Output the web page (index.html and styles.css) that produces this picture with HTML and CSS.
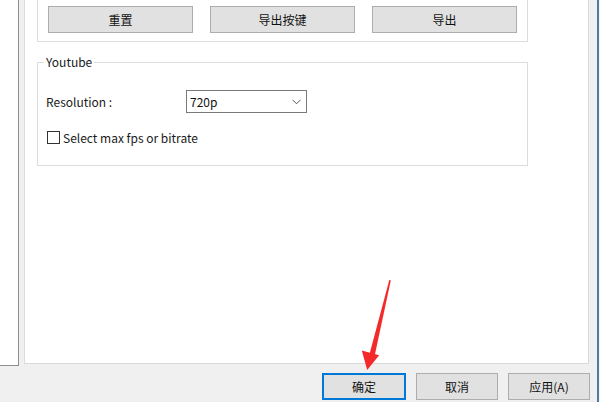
FILE: index.html
```html
<!DOCTYPE html>
<html lang="zh-CN">
<head>
<meta charset="utf-8">
<title>设置</title>
<link rel="stylesheet" href="styles.css">
</head>
<body>
<div class="frame">
  <div class="dialog">
    <div class="top">
      <div class="sidepane"></div>
      <div class="page">
        <div class="group group-top">
          <button class="btn wide">重置</button>
          <button class="btn wide">导出按键</button>
          <button class="btn wide">导出</button>
        </div>
        <fieldset class="group group-yt">
          <legend>Youtube</legend>
          <div class="row">
            <span class="label">Resolution :</span>
            <div class="combo">
              <span>720p</span>
              <svg class="chev" width="9" height="6" viewBox="0 0 9 6"><path d="M0.5 0.8 L4.5 4.8 L8.5 0.8" fill="none" stroke="#555" stroke-width="1"/></svg>
            </div>
          </div>
          <div class="row row-check">
            <span class="check"></span>
            <span>Select max fps or bitrate</span>
          </div>
        </fieldset>
      </div>
    </div>
    <div class="actions">
      <button class="btn act default">确定</button>
      <button class="btn act">取消</button>
      <button class="btn act">应用(A)</button>
    </div>
  </div>
  <div class="edge"></div>
  <div class="after"></div>
</div>
<svg class="arrow" width="600" height="402" viewBox="0 0 600 402">
  <polygon points="389.3,280 390.8,280.6 374.6,356 369.4,354.6" fill="#f42a2a"/>
  <polygon points="361.8,350.5 379.2,355.2 367.2,370" fill="#f42a2a"/>
</svg>
</body>
</html>
```
FILE: styles.css
```css
* { box-sizing: border-box; }
html, body { margin: 0; padding: 0; }
body {
  width: 600px;
  height: 402px;
  overflow: hidden;
  background: #ffffff;
  font-family: "Noto Sans CJK SC", "Noto Sans", sans-serif;
  font-size: 12px;
  color: #1a1a1a;
  position: relative;
}
.frame {
  display: flex;
  height: 402px;
}
.dialog {
  width: 597px;
  display: flex;
  flex-direction: column;
  background: #f0f0f0;
}
.edge { width: 2px; background: #4e7aa3; }
.after { width: 1px; background: #f4f4f4; }

.top {
  display: flex;
  height: 366px;
}
.sidepane {
  width: 19px;
  height: 366px;
  background: #ffffff;
  border-right: 1px solid #8e8e8e;
  border-bottom: 1px solid #8e8e8e;
}
.page {
  width: 565px;
  height: 364px;
  margin-left: 5px;
  background: #ffffff;
  border-left: 1px solid #dadada;
  border-right: 1px solid #dadada;
  border-bottom: 1px solid #dadada;
  padding-left: 12px;
  overflow: hidden;
}
.group {
  width: 491px;
  border: 1px solid #dcdcdc;
}
.group-top {
  margin-top: -10px;
  display: flex;
  gap: 17px;
  padding: 15px 10px 8px 10px;
}
.btn {
  font-family: "Noto Sans CJK SC", "Noto Sans", sans-serif;
  font-size: 12px;
  color: #111;
  background: #e1e1e1;
  border: 1px solid #adadad;
  height: 27px;
  padding: 0;
  margin: 0;
  line-height: 25px;
}
.wide { width: 145px; }

.group-yt {
  margin: 12px 0 0 0;
  padding: 0 0 21px 8px;
  min-width: 0;
}
.group-yt legend {
  padding: 0 2px;
  margin-left: -2px;
  line-height: 16px;
  color: #1a1a1a;
}
.row {
  display: flex;
  align-items: center;
  margin-top: 20px;
}
.label { width: 140px; }
.combo {
  width: 121px;
  height: 23px;
  border: 1px solid #7a7a7a;
  display: flex;
  align-items: center;
  justify-content: space-between;
  padding: 0 5px 0 3px;
  color: #111;
}
.chev { display: block; }
.row-check {
  margin-top: 18px;
  height: 13px;
}
.check {
  width: 13px;
  height: 13px;
  border: 1px solid #333333;
  background: #ffffff;
  margin: 0 3px 0 1px;
}

.actions {
  flex: 1;
  display: flex;
  justify-content: flex-end;
  align-items: flex-start;
  gap: 10px;
  padding: 7px 7px 0 0;
}
.act { width: 82px; }
.act.default {
  width: 84px;
  border: 2px solid #0078d7;
  line-height: 23px;
}
.arrow {
  position: absolute;
  left: 0;
  top: 0;
  pointer-events: none;
}
```
